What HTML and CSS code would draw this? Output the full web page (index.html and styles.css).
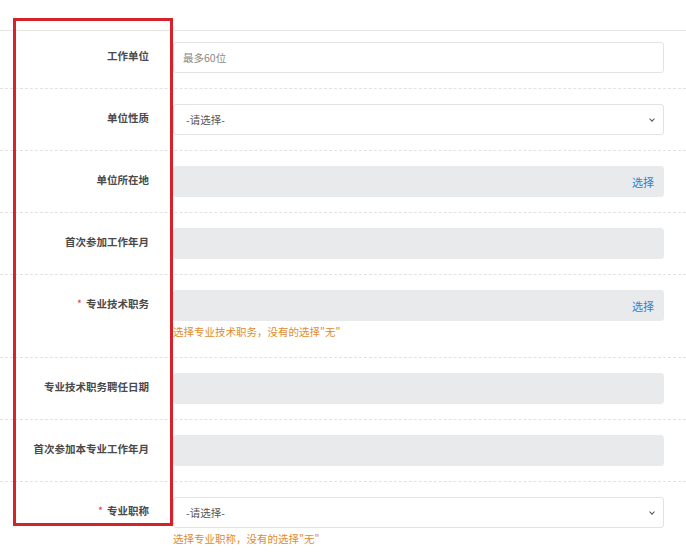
FILE: index.html
```html
<!DOCTYPE html>
<html lang="zh-CN">
<head>
	<meta charset="UTF-8">
	<meta name="viewport" content="width=device-width, initial-scale=1.0">
	<title>工作信息</title>
	<link rel="stylesheet" href="styles.css">
</head>
<body>
	<div class="page">
		<form class="form">
			<div class="form__row form__row--first">
				<label class="form__label">工作单位</label>
				<div class="form__field">
					<input type="text" class="form__inp" placeholder="最多60位">
				</div>
			</div>
			<div class="form__row">
				<label class="form__label">单位性质</label>
				<div class="form__field">
					<div class="form__select">-请选择-<span class="chev"></span></div>
				</div>
			</div>
			<div class="form__row">
				<label class="form__label">单位所在地</label>
				<div class="form__field">
					<div class="form__inp form__inp--off"><a class="pick">选择</a></div>
				</div>
			</div>
			<div class="form__row">
				<label class="form__label">首次参加工作年月</label>
				<div class="form__field">
					<div class="form__inp form__inp--off"></div>
				</div>
			</div>
			<div class="form__row">
				<label class="form__label"><span class="req">*</span>专业技术职务</label>
				<div class="form__field">
					<div class="form__inp form__inp--off"><a class="pick">选择</a></div>
					<div class="form__help">选择专业技术职务，没有的选择"无"</div>
				</div>
			</div>
			<div class="form__row">
				<label class="form__label">专业技术职务聘任日期</label>
				<div class="form__field">
					<div class="form__inp form__inp--off"></div>
				</div>
			</div>
			<div class="form__row">
				<label class="form__label">首次参加本专业工作年月</label>
				<div class="form__field">
					<div class="form__inp form__inp--off"></div>
				</div>
			</div>
			<div class="form__row form__row--last">
				<label class="form__label"><span class="req">*</span>专业职称</label>
				<div class="form__field">
					<div class="form__select">-请选择-<span class="chev"></span></div>
					<div class="form__help">选择专业职称，没有的选择"无"</div>
				</div>
			</div>
		</form>
		<div class="mark"></div>
	</div>
</body>
</html>
```

FILE: styles.css
```css
*{
	box-sizing: border-box;
}
body{
	margin: 0;
	background: #fff;
	font-family: "Noto Sans CJK SC", "Microsoft YaHei", sans-serif;
	font-size: 10.5px;
	color: #555;
	overflow: hidden;
}
.page{
	position: relative;
	width: 686px;
	height: 554px;
	padding-top: 30px;
}
.form{
	border-top: 1px solid #e6e6e6;
}
.form__row{
	display: flex;
	padding: 15px 0 15px;
	border-bottom: 1px dashed #e2e2e2;
}
.form__row--first{
	padding-top: 11px;
	padding-bottom: 15px;
}
.form__row--last{
	border-bottom: none;
}
.form__label{
	width: 149px;
	flex: none;
	text-align: right;
	font-weight: bold;
	color: #4a4a4a;
	line-height: 27px;
}
.req{
	color: #e03a3a;
	font-weight: normal;
	margin-right: 4px;
}
.form__field{
	margin-left: 24px;
	width: 491px;
}
.form__inp,
.form__select{
	display: flex;
	align-items: center;
	width: 100%;
	height: 31px;
	border: 1px solid #e3e3e3;
	border-radius: 3px;
	background: #fff;
	font-family: inherit;
	font-size: 10.5px;
	color: #555;
	padding: 0 9px;
	outline: none;
}
.form__inp::placeholder{
	color: #888;
}
.form__inp--off{
	background: #e9eaec;
	border-color: #e9eaec;
	justify-content: flex-end;
}
.form__select{
	padding-left: 12px;
	justify-content: space-between;
}
.chev{
	width: 4px;
	height: 4px;
	border-right: 1.5px solid #555;
	border-bottom: 1.5px solid #555;
	transform: rotate(45deg);
	margin: -2px 0 0;
}
.pick{
	color: #2b82d4;
	font-size: 11px;
	margin-right: 0;
	cursor: pointer;
}
.form__help{
	color: #e08b2e;
	font-size: 10.5px;
	line-height: 20px;
	padding-top: 1px;
}
.mark{
	position: absolute;
	left: 13px;
	top: 18px;
	width: 160px;
	height: 508px;
	border: 3px solid #d6232b;
	pointer-events: none;
}
```
